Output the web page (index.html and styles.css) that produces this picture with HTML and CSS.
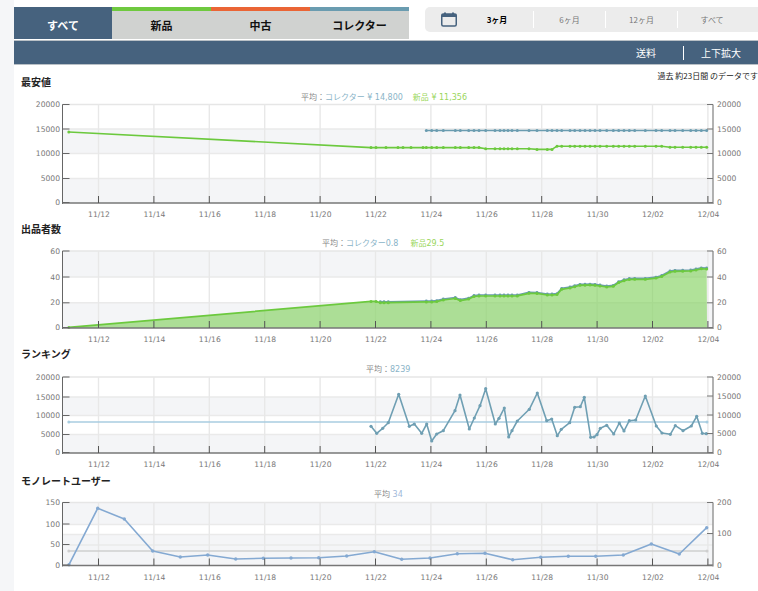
FILE: index.html
```html
<!DOCTYPE html>
<html lang="ja">
<head>
  <meta charset="utf-8">
  <title>グラフ</title>
  <link rel="stylesheet" href="styles.css">
</head>
<body>
  <div class="side-strip"></div>
  <div class="main">
    <div class="top-row">
      <div class="tabs">
        <div class="tab tab-all active">すべて</div>
        <div class="tab tab-new">新品</div>
        <div class="tab tab-used">中古</div>
        <div class="tab tab-collector">コレクター</div>
      </div>
      <div class="range">
        <span class="range-icon">
          <svg width="16" height="15" viewBox="0 0 16 15">
            <rect x="0.75" y="2" width="14.5" height="12" rx="1.5" fill="none" stroke="#46627e" stroke-width="1.5"/>
            <rect x="0.75" y="2" width="14.5" height="3" fill="#46627e"/>
            <rect x="3" y="0.5" width="2" height="2" fill="#46627e"/>
            <rect x="11" y="0.5" width="2" height="2" fill="#46627e"/>
          </svg>
        </span>
        <span class="range-item selected">3ヶ月</span>
        <span class="range-item">6ヶ月</span>
        <span class="range-item">12ヶ月</span>
        <span class="range-item last">すべて</span>
      </div>
    </div>
    <div class="toolbar">
      <span class="tool">送料</span>
      <span class="tool tool-zoom">上下拡大</span>
    </div>

    <div class="chart-head first">
      <h3>最安値</h3>
      <span class="note">過去 約23日間 のデータです</span>
    </div>
    <svg class="chart" id="chartPrice" width="744" height="133" viewBox="14 89 744 133"></svg>

    <div class="chart-head"><h3>出品者数</h3></div>
    <svg class="chart" id="chartSellers" width="744" height="111" viewBox="14 236 744 111"></svg>

    <div class="chart-head"><h3>ランキング</h3></div>
    <svg class="chart" id="chartRank" width="744" height="113" viewBox="14 361 744 113"></svg>

    <div class="chart-head"><h3>モノレートユーザー</h3></div>
    <svg class="chart" id="chartUsers" width="744" height="103" viewBox="14 488 744 103"></svg>
  </div>
  <script src="charts.js"></script>
</body>
</html>
```

FILE: styles.css
```css
html, body {
  margin: 0;
  height: 591px;
  overflow: hidden;
  background-color: white;
}
body {
  display: flex;
  font-family: "DejaVu Sans", "Noto Sans CJK JP", sans-serif;
}
.side-strip {
  width: 14px;
  flex: none;
  background-color: #f5f6f8;
}
.main {
  width: 744px;
  flex: none;
}
.top-row {
  display: flex;
  align-items: flex-start;
  height: 33px;
  padding-top: 7px;
}
.tabs {
  display: flex;
  width: 395px;
}
.tab {
  width: 99px;
  height: 28px;
  line-height: 28px;
  border-top: 4px solid #d0d2d0;
  background-color: #d0d2d0;
  text-align: center;
  font-family: "Noto Sans CJK JP", sans-serif;
  font-size: 11px;
  font-weight: bold;
  color: #111;
}
.tab.active {
  width: 98px;
  background-color: #46627e;
  border-top-color: #46627e;
  color: white;
}
.tab-new { border-top-color: #6fc93f; }
.tab-used { border-top-color: #ea6535; }
.tab-collector { border-top-color: #6a9cb0; }

.range {
  display: flex;
  align-items: center;
  margin-left: 16px;
  flex: 1;
  height: 25px;
  background-color: #ececec;
  border-radius: 5px 0 0 5px;
  font-family: "Noto Sans CJK JP", sans-serif;
  font-size: 8px;
  color: #777;
}
.range-icon {
  display: flex;
  width: 37px;
  padding-left: 16px;
}
.range-item {
  width: 72px;
  height: 17px;
  line-height: 17px;
  text-align: center;
  border-right: 1px solid white;
  box-sizing: border-box;
}
.range-item.selected {
  width: 56px;
  padding-right: 17px;
  color: black;
  font-weight: bold;
}
.range-item.last {
  border-right: none;
  padding-right: 4px;
}

.toolbar {
  display: flex;
  justify-content: flex-end;
  align-items: center;
  height: 23px;
  border-top: 1px solid #b9c0c6;
  border-bottom: 1px solid #b9c0c6;
  background-color: #46627e;
  font-family: "Noto Sans CJK JP", sans-serif;
  font-size: 10px;
  color: white;
}
.tool {
  padding-right: 27px;
}
.tool-zoom {
  border-left: 1px solid white;
  padding: 0 17px;
  line-height: 14px;
}

.chart-head {
  display: flex;
  justify-content: space-between;
  align-items: flex-start;
  height: 14px;
  padding-left: 7px;
}
.chart-head.first {
  height: 18px;
  padding-top: 6px;
}
.chart-head h3 {
  margin: 0;
  font-family: "Noto Sans CJK JP", sans-serif;
  font-size: 10px;
  line-height: 14px;
  font-weight: bold;
  color: #222;
}
.chart-head.first h3 {
  margin-top: 4px;
}
.note {
  font-family: "Noto Sans CJK JP", sans-serif;
  font-size: 8px;
  line-height: 10px;
  color: #222;
  white-space: nowrap;
}
.chart {
  display: block;
}
.axis-label {
  font-family: "DejaVu Sans", sans-serif;
  font-size: 7.6px;
  fill: #777;
}
.legend {
  font-family: "DejaVu Sans", "Noto Sans CJK JP", sans-serif;
  font-size: 8px;
  fill: #888;
}
```

FILE: charts.js
```js
const SVG_NS = "http://www.w3.org/2000/svg";
const TICK_X = [98.5, 153.9, 209.3, 264.7, 320.1, 375.5, 430.9, 486.3, 541.7, 597.1, 652.5, 707.9];
const TICK_DATES = ["11/12", "11/14", "11/16", "11/18", "11/20", "11/22", "11/24", "11/26", "11/28", "11/30", "12/02", "12/04"];
const LEFT = 62.5, RIGHT = 713;

function add(parent, tag, attrs, text) {
  const node = document.createElementNS(SVG_NS, tag);
  for (const key in attrs) node.setAttribute(key, attrs[key]);
  if (text) node.textContent = text;
  parent.appendChild(node);
  return node;
}

function line(svg, x1, y1, x2, y2, color, width) {
  add(svg, "line", { x1, y1, x2, y2, stroke: color, "stroke-width": width });
}

function toPoints(list) {
  return list.map(p => p[0] + "," + p[1]).join(" ");
}

// Bands, grid lines and the axes, all in page coordinates
function drawFrame(svg, c) {
  c.bands.forEach(b => add(svg, "rect", { x: LEFT, y: b[0], width: RIGHT - LEFT, height: b[1] - b[0], fill: "#f4f5f7" }));
  c.grid.forEach(y => line(svg, LEFT, y, RIGHT, y, "#eaeaea", 1.4));
  line(svg, LEFT, c.top, RIGHT, c.top, "#e6e6e6", 1.4);
  TICK_X.forEach(x => line(svg, x, c.top, x, c.bottom, "#e8e8e8", 1.4));
}

function drawAxes(svg, c) {
  line(svg, LEFT, c.top, LEFT, c.bottom + 1, "#666", 1);
  line(svg, LEFT, c.bottom, RIGHT, c.bottom, "#777", 1.5);
  line(svg, RIGHT, c.top, RIGHT, c.bottom + 1, "#999", 1.5);
  TICK_X.forEach((x, i) => {
    line(svg, x, c.bottom - 7, x, c.bottom, "#555", 1);
    add(svg, "text", { class: "axis-label", x: x + 0.5, y: c.bottom + 14, "text-anchor": "middle" }, TICK_DATES[i]);
  });
  c.left.forEach(t => {
    line(svg, LEFT, t[1], LEFT + 7, t[1], "#666", 1);
    add(svg, "text", { class: "axis-label", x: 60, y: t[1] + 2.5, "text-anchor": "end" }, t[0]);
  });
  c.right.forEach(t => {
    line(svg, RIGHT - 6, t[1], RIGHT, t[1], "#777", 1);
    add(svg, "text", { class: "axis-label", x: 717, y: t[1] + 2.5 }, t[0]);
  });
}

function drawSeries(svg, pts, color, width, radius) {
  add(svg, "polyline", { points: toPoints(pts), fill: "none", stroke: color, "stroke-width": width, "stroke-linejoin": "round" });
  if (radius) pts.forEach(p => add(svg, "circle", { cx: p[0], cy: p[1], r: radius, fill: color }));
}

function drawLegend(svg, x, y, parts) {
  const text = add(svg, "text", { class: "legend", x, y });
  parts.forEach(p => add(text, "tspan", { fill: p[1], dx: p[2] || 0 }, p[0]));
}

// Marker positions shared by the daily scrapes
const SCRAPE_X = [139, 155, 170, 190, 226, 241, 266, 282, 297, 317, 345, 360, 372, 384, 396, 412, 447, 471, 502, 516, 531, 545, 570, 584, 600, 615, 630, 645, 660, 680, 700, 716, 732, 748, 764, 796, 828, 845, 870, 885, 908, 932, 948, 964, 980]
  .map(x => +(380 + x / 3).toFixed(1));

// 最安値
function priceNewY(x) {
  if (x < 485) return 147.6;
  if (x < 536) return 148.8;
  if (x < 553) return 149.4;
  if (x < 663) return 146.2;
  return 147.3;
}
(function () {
  const svg = document.getElementById("chartPrice");
  const c = {
    top: 104.5, bottom: 203,
    bands: [[129, 153.5], [178.5, 203]],
    grid: [129, 153.5, 178.5],
    left: [["20000", 104.5], ["15000", 129], ["10000", 153.5], ["5000", 178.5], ["0", 202.5]],
    right: [["20000", 104.5], ["15000", 129], ["10000", 153.5], ["5000", 178.5], ["0", 202.5]]
  };
  drawFrame(svg, c);
  drawSeries(svg, SCRAPE_X.map(x => [x, 130.4]), "#6a9cb0", 1.5, 1.5);
  const early = [371, 376, 386, 398, 403, 411, 423];
  const green = [[68.8, 132]].concat(early.map(x => [x, 147.6]), SCRAPE_X.map(x => [x, priceNewY(x)]));
  drawSeries(svg, green, "#6cc93e", 1.6, 1.5);
  drawAxes(svg, c);
  drawLegend(svg, 301, 100, [["平均：", "#888"], ["コレクター ¥ 14,800", "#8ab4c8"], ["新品 ¥ 11,356", "#9ad65c", 10]]);
})();

// 出品者数
const SELLER_LINE = [[0, 230], [25, 230], [55, 221], [100, 221], [140, 228], [165, 228], [190, 222], [225, 217], [240, 224], [265, 220], [285, 210], [340, 210], [410, 210], [445, 202], [470, 202], [500, 207], [530, 207], [545, 190], [570, 186], [600, 178], [640, 177], [680, 183], [700, 181], [720, 167], [750, 160], [800, 160], [830, 156], [850, 150], [870, 138], [885, 136], [935, 135], [965, 128], [980, 129]];

function sellerY(zoomX) {
  for (let i = 1; i < SELLER_LINE.length; i++) {
    const a = SELLER_LINE[i - 1], b = SELLER_LINE[i];
    if (zoomX <= b[0]) return a[1] + (b[1] - a[1]) * (zoomX - a[0]) / (b[0] - a[0]);
  }
  return 129;
}

(function () {
  const svg = document.getElementById("chartSellers");
  const c = {
    top: 251, bottom: 328,
    bands: [[251, 277], [302.8, 328]],
    grid: [277, 302.8],
    left: [["60", 251], ["40", 277], ["20", 302.8], ["0", 327.5]],
    right: [["60", 251], ["40", 277], ["20", 302.8], ["0", 327.5]]
  };
  drawFrame(svg, c);
  const scrape = [1, 12, 25].concat(SCRAPE_X.map(x => (x - 380) * 3));
  const top = scrape.map(z => [+(380 + z / 3).toFixed(1), +(225 + sellerY(z) / 3).toFixed(1)]);
  const green = [[68.8, 327.4], [371, 301.4], [376, 301.4]].concat(top.map(p => [p[0], +(p[1] + 1).toFixed(1)]));
  add(svg, "polygon", { points: "68.8,328 " + toPoints(green) + " 707,328", fill: "#7fd05a", "fill-opacity": 0.62 });
  drawSeries(svg, top, "#6a9cb0", 1.5, 1.4);
  drawSeries(svg, green, "#6cc93e", 1.7, 1.5);
  drawAxes(svg, c);
  drawLegend(svg, 322, 245.5, [["平均：", "#888"], ["コレクター0.8", "#8ab4c8"], ["新品29.5", "#9ad65c", 12]]);
})();

// ランキング
(function () {
  const svg = document.getElementById("chartRank");
  const c = {
    top: 377, bottom: 453,
    bands: [[397, 415.5], [434.5, 453]],
    grid: [397, 415.5, 434.5],
    left: [["20000", 377], ["15000", 397], ["10000", 415.5], ["5000", 434.5], ["0", 452.5]],
    right: [["20000", 377], ["15000", 396], ["10000", 415], ["5000", 433.5], ["0", 452.5]]
  };
  drawFrame(svg, c);
  const a = [[33, 229], [50, 250], [68, 235], [85, 218], [116, 133], [148, 229], [163, 222], [185, 250], [200, 222], [215, 273], [230, 252], [250, 242], [285, 182], [300, 135], [328, 237], [343, 204], [360, 167], [377, 116], [406, 222], [417, 205], [433, 174], [446, 261], [456, 242], [472, 213], [508, 178], [532, 129], [560, 212], [575, 207], [592, 257]];
  const b = [[10, 238], [35, 218], [50, 172], [67, 170], [79, 142], [98, 262], [108, 261], [117, 254], [127, 235], [146, 226], [167, 252], [184, 219], [198, 243], [214, 212], [233, 210], [262, 138], [295, 228], [312, 249], [337, 253], [352, 227], [375, 242], [400, 228], [416, 199], [433, 250], [445, 251]];
  const pts = a.map(p => [+(360 + p[0] / 3).toFixed(1), +(350 + p[1] / 3).toFixed(1)])
    .concat(b.map(p => [+(558 + p[0] / 3).toFixed(1), +(350 + p[1] / 3).toFixed(1)]));
  drawSeries(svg, [[68.8, 422], [707, 422]], "#a8cde0", 1.6, 1.5);
  drawSeries(svg, pts, "#6f9fb3", 1.6, 1.6);
  drawAxes(svg, c);
  drawLegend(svg, 366, 372, [["平均：", "#888"], ["8239", "#8ab4c8"]]);
})();

// モノレートユーザー
(function () {
  const svg = document.getElementById("chartUsers");
  const c = {
    top: 502.5, bottom: 565.5,
    bands: [[502.5, 524.5], [534.5, 565.5]],
    grid: [524.5, 534.5, 545],
    left: [["150", 502.5], ["100", 524], ["50", 544.5], ["0", 565]],
    right: [["200", 502.5], ["100", 533.5], ["0", 565]]
  };
  drawFrame(svg, c);
  const a = [[207, 284], [293, 115], [373, 147], [458, 243], [541, 261], [623, 255], [707, 267], [790, 265], [873, 264], [956, 263], [1040, 258], [1123, 245]];
  const b = [[65, 268], [150, 264], [232, 251], [315, 250], [398, 269], [482, 262], [565, 259], [647, 259], [730, 255], [814, 222], [898, 252], [980, 173]];
  const pts = a.map(p => [+(p[0] / 3).toFixed(1), +(470 + p[1] / 3).toFixed(1)])
    .concat(b.map(p => [+(380 + p[0] / 3).toFixed(1), +(470 + p[1] / 3).toFixed(1)]));
  drawSeries(svg, [[68.8, 551], [707, 551]], "#cfcfcf", 1.4, 1.5);
  drawSeries(svg, pts, "#84a9d2", 1.6, 1.7);
  drawAxes(svg, c);
  drawLegend(svg, 374, 497, [["平均 ", "#888"], ["34", "#9fb9da"]]);
})();
```
